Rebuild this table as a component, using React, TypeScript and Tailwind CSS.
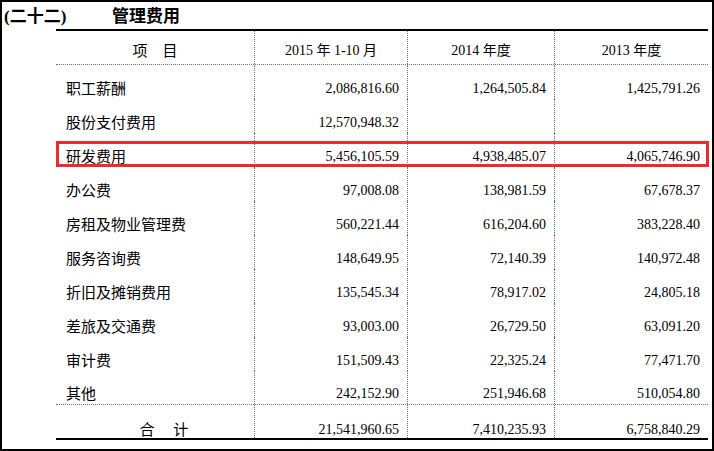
import React from "react";

const rows: [string, string, string, string][] = [
  ["职工薪酬", "2,086,816.60", "1,264,505.84", "1,425,791.26"],
  ["股份支付费用", "12,570,948.32", "", ""],
  ["研发费用", "5,456,105.59", "4,938,485.07", "4,065,746.90"],
  ["办公费", "97,008.08", "138,981.59", "67,678.37"],
  ["房租及物业管理费", "560,221.44", "616,204.60", "383,228.40"],
  ["服务咨询费", "148,649.95", "72,140.39", "140,972.48"],
  ["折旧及摊销费用", "135,545.34", "78,917.02", "24,805.18"],
  ["差旅及交通费", "93,003.00", "26,729.50", "63,091.20"],
  ["审计费", "151,509.43", "22,325.24", "77,471.70"],
  ["其他", "242,152.90", "251,946.68", "510,054.80"],
];

const cjk = { fontFamily: '"Liberation Serif", "Noto Sans CJK SC", serif' };

export default function App() {
  return (
    <div
      className="w-[714px] h-[451px] border-2 border-black bg-white text-black box-border overflow-hidden"
      style={cjk}
    >
      <div className="h-[27px] flex items-center pt-[2px] font-bold text-[17px] leading-none">
        <span className="ml-[2px] w-[108px]">(二十二)</span>
        <span>管理费用</span>
      </div>
      <div className="ml-[54px] w-[652px] border-t-2 border-black">
        <div className="grid grid-cols-[198px_153px_147px_154px] h-[34px] border-b border-dotted border-gray-500 text-[14px] leading-[18px]">
          <div className="flex items-end justify-center pb-[4px] text-[15px]">项&nbsp;&nbsp;&nbsp;&nbsp;目</div>
          <div className="flex items-end justify-center pb-[4px] border-l border-dotted border-gray-500">2015 年 1-10 月</div>
          <div className="flex items-end justify-center pb-[4px] border-l border-dotted border-gray-500">2014 年度</div>
          <div className="flex items-end justify-center pb-[4px] border-l border-dotted border-gray-500">2013 年度</div>
        </div>
        {rows.map((r, i) => (
          <div
            key={i}
            className={
              "relative grid grid-cols-[198px_153px_147px_154px] h-[34px] text-[14px] leading-[18px] " +
              (i === rows.length - 1 ? "border-b border-dotted border-gray-500" : "")
            }
          >
            <div className="flex items-end pl-[10px] pb-[1px] text-[15px]">{r[0]}</div>
            <div className="flex items-end justify-end pr-[8px] pb-[1px] border-l border-dotted border-gray-500">{r[1]}</div>
            <div className="flex items-end justify-end pr-[8px] pb-[1px] border-l border-dotted border-gray-500">{r[2]}</div>
            <div className="flex items-end justify-end pr-[8px] pb-[1px] border-l border-dotted border-gray-500">{r[3]}</div>
            {i === 2 && (
              <div className="absolute left-0 right-[-1px] top-[8px] bottom-[0px] border-[3px] border-[#ee2b2b]" />
            )}
          </div>
        ))}
        <div className="grid grid-cols-[198px_153px_147px_154px] h-[35px] border-b-2 border-black text-[14px] leading-[16px]">
          <div className="flex items-end justify-center pb-[0px] text-[15px] pl-[18px]">合&nbsp;&nbsp;&nbsp;&nbsp;&nbsp;计</div>
          <div className="flex items-end justify-end pr-[8px] pb-[0px] border-l border-dotted border-gray-500">21,541,960.65</div>
          <div className="flex items-end justify-end pr-[8px] pb-[0px] border-l border-dotted border-gray-500">7,410,235.93</div>
          <div className="flex items-end justify-end pr-[8px] pb-[0px] border-l border-dotted border-gray-500">6,758,840.29</div>
        </div>
      </div>
    </div>
  );
}
